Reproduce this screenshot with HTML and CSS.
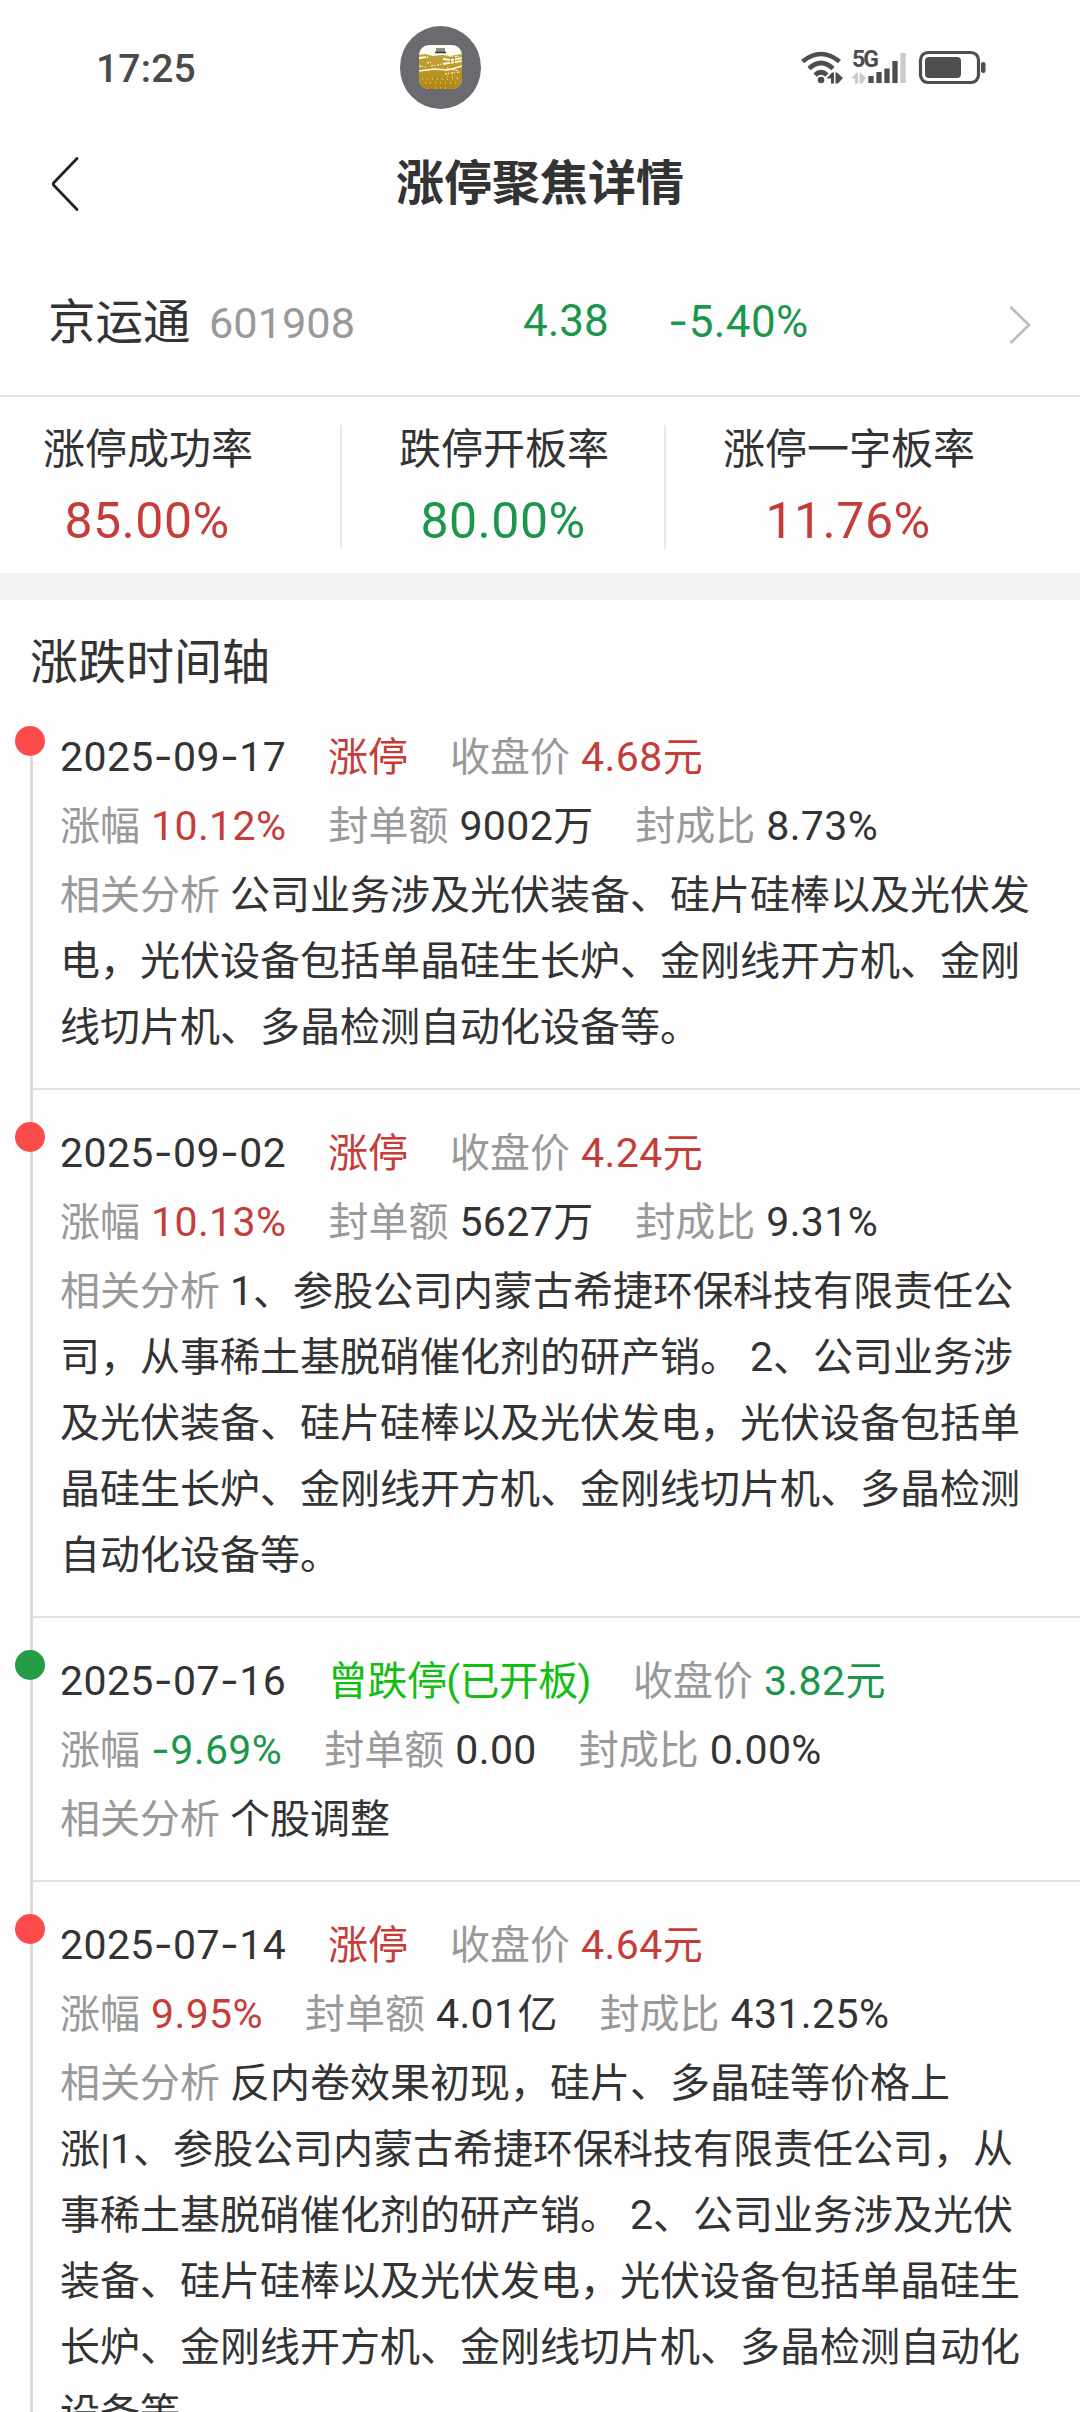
FILE: index.html
```html
<!DOCTYPE html>
<html lang="zh-CN">
<head>
<meta charset="utf-8">
<title>涨停聚焦详情</title>
<link rel="stylesheet" href="styles.css">
</head>
<body>
<header class="status">
  <span class="clock">17:25</span>
  <span class="island">
    <svg width="43" height="44" viewBox="0 0 43 44">
      <defs>
        <linearGradient id="gold" x1="0" y1="0" x2="0" y2="1"><stop offset="0" stop-color="#bfa440"/><stop offset="1" stop-color="#b5860f"/></linearGradient>
        <clipPath id="tile"><rect width="43" height="44" rx="10"/></clipPath>
      </defs>
      <g clip-path="url(#tile)">
        <rect width="43" height="44" fill="#fffdf2"/>
        <path d="M0 10l6-1 8 2 9-1 8 1 12-2v35H0z" fill="url(#gold)"/>
        <g fill="none" stroke="#fffbe4">
          <path d="M0 26l15-2 14 1 14-4" stroke-width="1.500"/>
          <path d="M24 19l19-3M24 14l9 1 10-2M0 13l9-1" stroke-width="1.800" stroke-dasharray="7 1 3 1"/>
          <path d="M12 21l12-2M26 29l14-2M8 18l6-1M28 23l12 3M0 21l7 1M30 11l12 1" stroke-width="1.200" stroke-dasharray="2 1 1 2"/>
          <path d="M3 34h36M6 38h32M16 43h12M28 31l12 2" stroke-width=".8" stroke-dasharray="1 4"/>
        </g>
        <path d="M17 3h9v4h-9z" fill="#8b8d87"/><path d="M16 7.500h11" stroke="#333" stroke-width="1.500"/>
      </g>
    </svg>
  </span>
  <span class="signals">
    <svg width="190" height="40" viewBox="0 0 190 40" fill="none" stroke="#4e4e4e">
      <path d="M2.500 11.500Q21 -3.500 39.500 11.500M9 18.500Q21 7.500 33 18.500M15 25Q21 19.500 27 25" stroke-width="4.600"/>
      <circle cx="21" cy="30" r="3.300" fill="#4e4e4e" stroke="none"/>
      <path d="M26.500 28.500l5.500-6h2v11h-3v-5zM35.500 22.500h1.500l6 5.500-5 5.500h-2.500z" fill="#4e4e4e" stroke="none"/>
      <path d="M51 28.500l5.500-6h1.500v11h-3v-5zM59.500 22.500h1l5.500 5.500-4 5.500h-2.500z" fill="#cbcbcb" stroke="none"/>
      <path d="M71 26v7M79 22v11M87 18.500v14.500M95 11v22" stroke-width="5.300"/>
      <path d="M103 3v30" stroke="#cbcbcb" stroke-width="5.300"/>
      <rect x="120.500" y="2.500" width="58" height="30" rx="7.500" stroke-width="3.200"/>
      <rect x="125" y="7" width="36" height="21" rx="4" fill="#4e4e4e" stroke="none"/>
      <rect x="181" y="12" width="4.500" height="11" rx="2.200" fill="#4e4e4e" stroke="none"/>
    </svg>
    <span class="net">5G</span>
  </span>
</header>

<nav class="titlebar">
  <svg class="back" width="28" height="54" viewBox="0 0 28 54"><path d="M26 1.500L3 25.500Q1.500 27 3 28.500L26 52.500" fill="none" stroke="#222" stroke-width="2.800" stroke-linecap="round"/></svg>
  <h1>涨停聚焦详情</h1>
</nav>

<section class="stock">
  <span class="name">京运通</span>
  <span class="code">601908</span>
  <span class="price">4.38</span>
  <span class="change"><i>-</i>5.40%</span>
  <svg class="go" width="22" height="40" viewBox="0 0 22 40"><path d="M1.500 2L20 20L1.500 38" fill="none" stroke="#bbb" stroke-width="2.600"/></svg>
</section>

<section class="rates">
  <div class="rate first"><span>涨停成功率</span><b class="up">85.00%</b></div>
  <div class="rate second"><span>跌停开板率</span><b class="down">80.00%</b></div>
  <div class="rate third"><span>涨停一字板率</span><b class="up">11.76%</b></div>
</section>

<h2>涨跌时间轴</h2>
<main class="timeline">
  <article class="event">
    <div class="row"><b>2025<i>-</i>09<i>-</i>17</b><span class="up">涨停</span><span class="pair"><em>收盘价</em><span class="up"><b>4.68</b>元</span></span></div>
    <div class="row"><span class="pair"><em>涨幅</em><b class="up">10.12%</b></span><span class="pair"><em>封单额</em><span><b>9002</b>万</span></span><span class="pair"><em>封成比</em><b>8.73%</b></span></div>
    <p><em class="lead">相关分析</em>公司业务涉及光伏装备、硅片硅棒以及光伏发<br>电，光伏设备包括单晶硅生长炉、金刚线开方机、金刚<br>线切片机、多晶检测自动化设备等。</p>
  </article>
  <article class="event">
    <div class="row"><b>2025<i>-</i>09<i>-</i>02</b><span class="up">涨停</span><span class="pair"><em>收盘价</em><span class="up"><b>4.24</b>元</span></span></div>
    <div class="row"><span class="pair"><em>涨幅</em><b class="up">10.13%</b></span><span class="pair"><em>封单额</em><span><b>5627</b>万</span></span><span class="pair"><em>封成比</em><b>9.31%</b></span></div>
    <p><em class="lead">相关分析</em><b>1</b>、参股公司内蒙古希捷环保科技有限责任公<br>司，从事稀土基脱硝催化剂的研产销。 <b>2</b>、公司业务涉<br>及光伏装备、硅片硅棒以及光伏发电，光伏设备包括单<br>晶硅生长炉、金刚线开方机、金刚线切片机、多晶检测<br>自动化设备等。</p>
  </article>
  <article class="event green">
    <div class="row"><b>2025<i>-</i>07<i>-</i>16</b><span class="opened">曾跌停(已开板)</span><span class="pair"><em>收盘价</em><span class="down"><b>3.82</b>元</span></span></div>
    <div class="row"><span class="pair"><em>涨幅</em><b class="down"><i>-</i>9.69%</b></span><span class="pair"><em>封单额</em><b>0.00</b></span><span class="pair"><em>封成比</em><b>0.00%</b></span></div>
    <p><em class="lead">相关分析</em>个股调整</p>
  </article>
  <article class="event">
    <div class="row"><b>2025<i>-</i>07<i>-</i>14</b><span class="up">涨停</span><span class="pair"><em>收盘价</em><span class="up"><b>4.64</b>元</span></span></div>
    <div class="row"><span class="pair"><em>涨幅</em><b class="up">9.95%</b></span><span class="pair"><em>封单额</em><span><b>4.01</b>亿</span></span><span class="pair"><em>封成比</em><b>431.25%</b></span></div>
    <p><em class="lead">相关分析</em>反内卷效果初现，硅片、多晶硅等价格上<br>涨<b>|1</b>、参股公司内蒙古希捷环保科技有限责任公司，从<br>事稀土基脱硝催化剂的研产销。 <b>2</b>、公司业务涉及光伏<br>装备、硅片硅棒以及光伏发电，光伏设备包括单晶硅生<br>长炉、金刚线开方机、金刚线切片机、多晶检测自动化<br>设备等。</p>
  </article>
</main>
</body>
</html>
```

FILE: styles.css
```css
* { box-sizing: border-box; }
body {
  margin: 0;
  width: 1080px;
  height: 2412px;
  overflow: hidden;
  display: flex;
  flex-direction: column;
  background: #fefefe;
  color: #333;
  font-family: Roboto, "Noto Sans CJK SC", sans-serif;
  font-size: 40px;
}
body > * { flex: none; }
i, em { font-style: normal; }
b { font-weight: 400; }
i { font-family: Inter, sans-serif; }
em { color: #999; }
.up { color: #c43d38; }
.down { color: #1b964c; }
.opened { color: #12be12; letter-spacing: -0.6px; }

.status {
  height: 134px;
  display: grid;
  grid-template-columns: 400px 81px 1fr;
  align-items: center;
}
.clock {
  padding: 3px 0 0 96px;
  font: 500 39px/60px Roboto, sans-serif;
  letter-spacing: 0.2px;
  color: #4a4a4a;
}
.island {
  width: 81px;
  height: 83px;
  border-radius: 50%;
  background: #6a6b6f;
  display: flex;
  align-items: center;
  justify-content: center;
}
.signals { position: relative; height: 40px; margin-left: 319px; margin-top: 5px; }
.signals svg { display: block; }
.net {
  position: absolute;
  left: 52px;
  top: -1px;
  font: 700 23px/22px Roboto, sans-serif;
  letter-spacing: -2px;
  color: #4e4e4e;
}

.titlebar {
  height: 100px;
  display: grid;
  grid-template-columns: 51px 28px 1fr 79px;
  align-items: center;
}
.back { grid-column: 2; }
h1 {
  margin: 0;
  font-size: 48px;
  line-height: 100px;
  font-weight: 700;
  text-align: center;
}

.stock {
  height: 163px;
  border-bottom: 2px solid #e4e4e4;
  display: grid;
  grid-template-columns: 161px 314px 145px 341px 22px;
  padding: 15px 0 0 48px;
  line-height: 148px;
}
.name { font-size: 47.5px; }
.code { font-size: 43.3px; color: #999; padding-top: 1px; }
.price, .change { font-size: 44px; color: #1b964c; margin-top: -2px; }
.change { letter-spacing: 0.4px; }
.go { margin-top: 56px; }

.rates {
  height: 203px;
  border-bottom: 27px solid #f3f3f3;
  display: grid;
  grid-template-columns: 342px 324px 414px;
  padding: 28px 0 24px;
}
.rate {
  display: flex;
  flex-direction: column;
  border-right: 2px solid #e8e8e8;
  font-size: 42px;
  line-height: 49px;
}
.rate.third { border-right: 0; }
.rate span, .rate b { width: 250px; text-align: center; }
.rate b { font-size: 50px; line-height: 94px; height: 74px; letter-spacing: 0.5px; }
.first { padding-left: 23px; }
.second { padding-left: 37px; }
.third { padding-left: 57px; }
.rate.third span, .rate.third b { width: 252px; white-space: nowrap; }
.rate b { position: relative; left: -1px; }

h2 {
  margin: 0;
  padding-left: 30px;
  height: 126px;
  line-height: 126px;
  font-size: 48px;
  font-weight: 400;
}
.timeline {
  width: 1050px;
  margin-left: 30px;
  height: 1686px;
  border-left: 3px solid #dcdcdc;
}
.event {
  position: relative;
  padding: 31px 0 27px 27px;
  border-bottom: 2px solid #e0e0e0;
}
.event:first-child { padding-top: 0; }
.event:first-child .row:first-child { height: 68px; line-height: 64px; }
.event::before {
  content: "";
  position: absolute;
  left: -18px;
  top: 32px;
  width: 30px;
  height: 30px;
  border-radius: 50%;
  background: #fc4b4b;
}
.event:first-child::before { top: 0; }
.event.green::before { background: #249c48; }
.row { display: flex; align-items: baseline; gap: 42px; height: 69px; line-height: 66px; }
.row .pair { display: flex; gap: 11px; align-items: baseline; }
.event b { font-size: 41px; line-height: 1; }
.row b { letter-spacing: 0.4px; }
.event p { margin: 0; line-height: 66px; white-space: nowrap; }
.lead { margin-right: 10px; }
```
